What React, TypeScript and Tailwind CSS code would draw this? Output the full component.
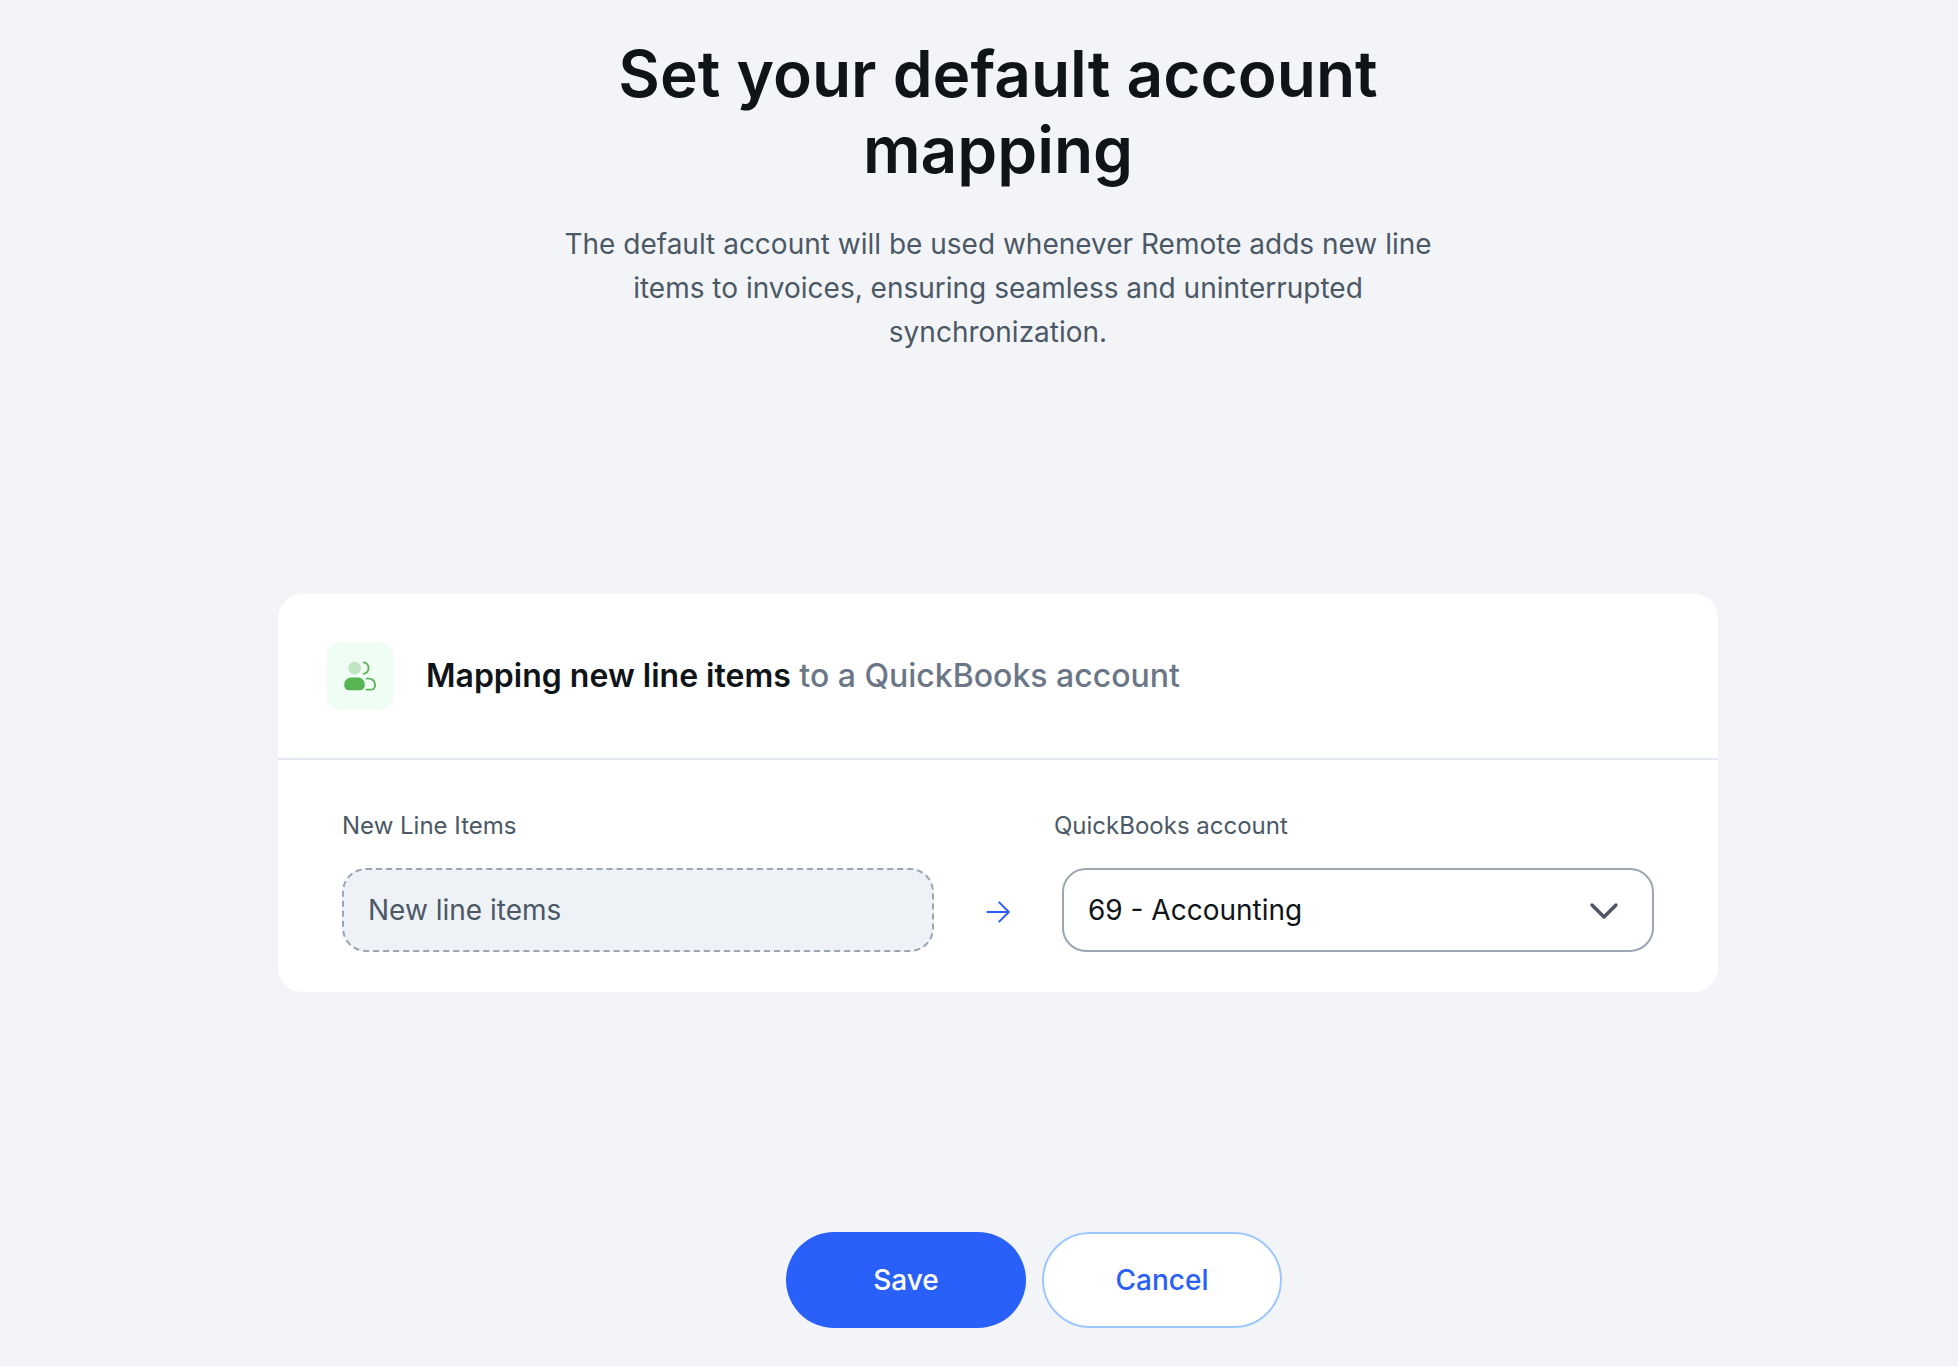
import { useState } from 'react'

const ACCOUNTS = [
  '69 - Accounting',
]

function PeopleIcon() {
  return (
    <svg
      viewBox="0 0 68 68"
      className="size-full"
      fill="none"
      aria-hidden="true"
    >
      <circle cx="28.7" cy="26" r="6.4" fill="#bfe6c1" />
      <path
        d="M25 35.6h7.2a6.5 6.5 0 0 1 6.5 6.5v1.6a4.6 4.6 0 0 1-4.6 4.6H22.9a4.6 4.6 0 0 1-4.6-4.6v-1.6a6.6 6.6 0 0 1 6.7-6.5z"
        fill="#57b453"
      />
      <path
        d="M37.8 20.4a5.8 5.8 0 0 1 0 11.4M40.6 36.6h2.4a6 6 0 0 1 6 6v1.2a3.9 3.9 0 0 1-3.9 3.9h-4.5"
        stroke="#57b453"
        strokeWidth="1.8"
        strokeLinecap="round"
      />
    </svg>
  )
}

function ArrowIcon() {
  return (
    <svg
      viewBox="0 0 24 24"
      className="size-6"
      fill="none"
      stroke="#2a60fa"
      strokeWidth="2"
      strokeLinecap="round"
      strokeLinejoin="round"
      aria-hidden="true"
    >
      <path d="M1.4 12h21.4M13.2 2.4l9.6 9.6-9.6 9.6" />
    </svg>
  )
}

function ChevronIcon() {
  return (
    <svg
      viewBox="0 0 32 32"
      className="pointer-events-none absolute top-1/2 right-[34px] size-8 -translate-y-1/2"
      fill="none"
      stroke="#4b5563"
      strokeWidth="3.4"
      strokeLinecap="round"
      strokeLinejoin="round"
      aria-hidden="true"
    >
      <path d="M4 11l12 12L28 11" />
    </svg>
  )
}

function MappingCard() {
  const [account, setAccount] = useState(ACCOUNTS[0])

  return (
    <section className="w-full max-w-[1440px] rounded-3xl bg-white">
      <header className="flex items-center gap-8 border-b-2 border-[#e4e9ef] p-12">
        <div className="size-[68px] shrink-0 rounded-2xl bg-[#f0fdf5]">
          <PeopleIcon />
        </div>
        <h2 className="text-[32px] leading-10 font-medium text-[#6b7787]">
          <span className="font-semibold text-[#0f1419]">
            Mapping new line items
          </span>{' '}
          to a QuickBooks account
        </h2>
      </header>

      <div className="px-16 pt-12 pb-10">
        <div className="mb-6 grid grid-cols-2 gap-28 text-2xl leading-9 text-[#4b5865]">
          <label htmlFor="line-items">New Line Items</label>
          <label htmlFor="account">QuickBooks account</label>
        </div>

        <div className="grid grid-cols-[1fr_128px_1fr] items-center">
          <input
            id="line-items"
            type="text"
            readOnly
            value="New line items"
            className="h-[84px] w-full rounded-3xl border-2 border-dashed border-[#9ca6b3] bg-[#eef2f7] px-6 text-[28px] text-[#4b5865] outline-none"
          />
          <div className="flex justify-center pt-1">
            <ArrowIcon />
          </div>
          <div className="relative">
            <select
              id="account"
              value={account}
              onChange={e => setAccount(e.target.value)}
              className="h-[84px] w-full appearance-none rounded-3xl border-2 border-[#9ca6b3] bg-white px-6 text-[28px] text-[#0f1419] outline-none"
            >
              {ACCOUNTS.map(item => (
                <option key={item} value={item}>
                  {item}
                </option>
              ))}
            </select>
            <ChevronIcon />
          </div>
        </div>
      </div>
    </section>
  )
}

export default function App() {
  return (
    <main className="flex min-h-screen flex-col items-center bg-[#f3f4f8] pt-9 pb-9 pl-[38px] font-['Inter',sans-serif]">
      <div className="w-full max-w-[880px] text-center">
        <h1 className="text-[64px] leading-[76px] font-semibold text-[#0f1419]">
          Set your default account mapping
        </h1>
        <p className="mt-[34px] text-[28px] leading-[44px] text-[#4b5865]">
          The default account will be used whenever Remote adds new line
          items to invoices, ensuring seamless and uninterrupted
          synchronization.
        </p>
      </div>

      <div className="flex w-full justify-center py-60">
        <MappingCard />
      </div>

      <div className="ml-[72px] flex gap-4 text-[28px] font-medium">
        <button
          type="button"
          className="h-24 w-60 rounded-full bg-[#2a60fa] text-white"
        >
          Save
        </button>
        <button
          type="button"
          className="h-24 w-60 rounded-full border-2 border-[#9cc8ff] bg-white text-[#2a60fa]"
        >
          Cancel
        </button>
      </div>
    </main>
  )
}
